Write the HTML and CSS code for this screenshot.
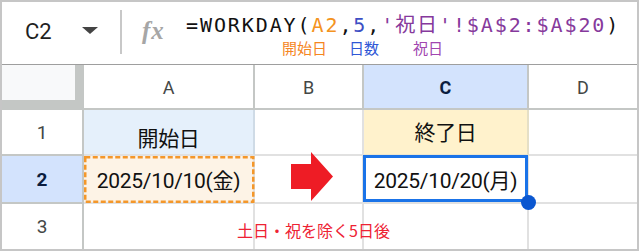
FILE: index.html
```html
<!DOCTYPE html>
<html lang="ja">
<head>
  <meta charset="UTF-8" />
  <title>WORKDAY</title>
  <link rel="stylesheet" href="styles.css">
</head>
<body>
  <div class="sheet">
    <div class="fbar">
      <div class="namebox"><span class="ref">C2</span><span class="caret"></span></div>
      <div class="sep"></div>
      <div class="fx">fx</div>
      <div class="formula">
        <div class="code">=WORKDAY(<span class="c-ref">A2</span>,<span class="c-num">5</span>,<span class="c-hol">'祝日'!$A$2:$A$20</span>)</div>
        <div class="notes"><span class="n-start">開始日</span><span class="n-days">日数</span><span class="n-hol">祝日</span></div>
      </div>
    </div>

    <div class="grid">
      <div class="corner"><div class="corner-in"></div></div>
      <div class="colhead">A</div>
      <div class="colhead">B</div>
      <div class="colhead sel">C</div>
      <div class="colhead last">D</div>

      <div class="rowhead">1</div>
      <div class="cell a1">開始日</div>
      <div class="cell"></div>
      <div class="cell c1">終了日</div>
      <div class="cell last"></div>

      <div class="rowhead sel">2</div>
      <div class="cell a2">
        <svg class="dash" width="171" height="47" viewBox="0 0 171 47"><rect x="1.25" y="1.25" width="168" height="44.5" fill="none" stroke="#f4972a" stroke-width="2.5" stroke-dasharray="5 2.5"/></svg>
        <span>2025/10/10(金)</span>
      </div>
      <div class="cell b2">
        <svg class="arrow" width="42" height="49" viewBox="0 0 42 49"><polygon points="0,12 20,12 20,0 42,24.5 20,49 20,37 0,37" fill="#ee1c25"/></svg>
      </div>
      <div class="cell c2">2025/10/20(月)</div>
      <div class="cell last"></div>

      <div class="rowhead bottom">3</div>
      <div class="cell bottom"></div>
      <div class="cell bottom"></div>
      <div class="cell bottom"></div>
      <div class="cell bottom last"></div>
    </div>

    <div class="note">土日・祝を除く5日後</div>
    <div class="handle"></div>
  </div>
</body>
</html>
```

FILE: styles.css
```css
* { box-sizing: border-box; margin: 0; padding: 0; }

body {
  background: #fff;
  font-family: Roboto, "Noto Sans CJK JP", sans-serif;
}

.sheet {
  position: relative;
  width: 639px; height: 251px;
  border: 2px solid #c6c6c6;
  overflow: hidden;
}

/* formula bar */
.fbar {
  display: flex;
  height: 63px;
  border-bottom: 1px solid #9e9e9e;
}
.namebox {
  width: 118px;
  display: flex;
  align-items: center;
  padding: 0 0 4px 23px;
}
.ref { font-size: 22px; color: #1f1f1f; }
.caret {
  margin-left: 30px;
  width: 0; height: 0;
  border-left: 8px solid transparent;
  border-right: 8px solid transparent;
  border-top: 7px solid #444;
  margin-top: -2px;
}
.sep {
  width: 2px;
  margin: 8px 0 10px;
  background: #c8c8c8;
}
.fx {
  width: 64px;
  padding: 16px 0 0 20px;
  font-family: "Liberation Serif", serif;
  font-style: italic; font-weight: bold;
  font-size: 25px; line-height: 1;
  color: #a6a6a6;
  letter-spacing: 1px;
}
.formula { padding-top: 11px; }
.code {
  font-family: "DejaVu Sans Mono", "Noto Sans CJK JP", monospace;
  font-size: 20px; line-height: 24px;
  letter-spacing: 1.9px;
  color: #111;
}
.c-ref { color: #f49321; }
.c-num { color: #3d4fc4; }
.c-hol { color: #86399c; }
.notes {
  font-family: "Noto Sans CJK JP", sans-serif;
  font-size: 15px; line-height: 20px;
  margin: 1px 0 0 96px;
}
.n-start { color: #f5861f; }
.n-days { color: #2f57d6; margin-left: 22px; }
.n-hol { color: #a146b0; margin-left: 34px; }

/* grid */
.grid {
  display: grid;
  grid-template-columns: 82px 171px 109px 165px 108px;
  grid-template-rows: 45px 46px 48px 45px;
}
.corner {
  background: #c4c7c5;
  border-right: 2px solid #c4c7c5;
  border-bottom: 2px solid #c4c7c5;
}
.corner-in { width: 73px; height: 35px; background: #f8f9fa; }
.colhead {
  display: flex; align-items: center; justify-content: center;
  font-size: 18px; color: #444746;
  border-right: 2px solid #c4c7c5;
  border-bottom: 2px solid #c4c7c5;
  padding-top: 1px;
}
.colhead.sel { background: #d3e3fd; color: #0b1d3f; font-weight: bold; }
.rowhead {
  display: flex; align-items: center; justify-content: center;
  font-size: 19px; color: #444746;
  border-right: 2px solid #c4c7c5;
  border-bottom: 2px solid #c4c7c5;
}
.rowhead.sel { background: #d3e3fd; color: #0b1d3f; font-weight: bold; }
.cell {
  position: relative;
  display: flex; align-items: center; justify-content: center;
  font-size: 21px; color: #111;
  letter-spacing: -0.3px;
  border-right: 2px solid #e1e1e1;
  border-bottom: 2px solid #e1e1e1;
}
.last { border-right: none; }
.bottom { border-bottom: none; }

.a1 {
  background: #e5f0fb;
  border-right-color: #cfdbe6;
  align-items: flex-end;
  padding-bottom: 2px;
}
.c1 { background: #fff2cc; border-right-color: #e5dfc6; border-bottom-color: #ece6cf; padding-bottom: 2px; }
.a2 { background: #fdf3e6; }
.a2 span { position: relative; }
.dash { position: absolute; left: 0; top: 0; }
.arrow { position: absolute; left: 36px; top: -4px; }
.c2::after {
  content: "";
  position: absolute;
  top: -1px; left: -1px; right: -1px; bottom: 0;
  border: 3px solid #1a73e8;
}

.note {
  position: absolute;
  left: 235px; top: 216px;
  font-family: "Noto Sans CJK JP", sans-serif;
  font-size: 16px; color: #ee2233;
}
.handle {
  position: absolute;
  left: 519px; top: 193px;
  width: 15px; height: 15px;
  border-radius: 50%;
  background: #0b57d0;
}
```
